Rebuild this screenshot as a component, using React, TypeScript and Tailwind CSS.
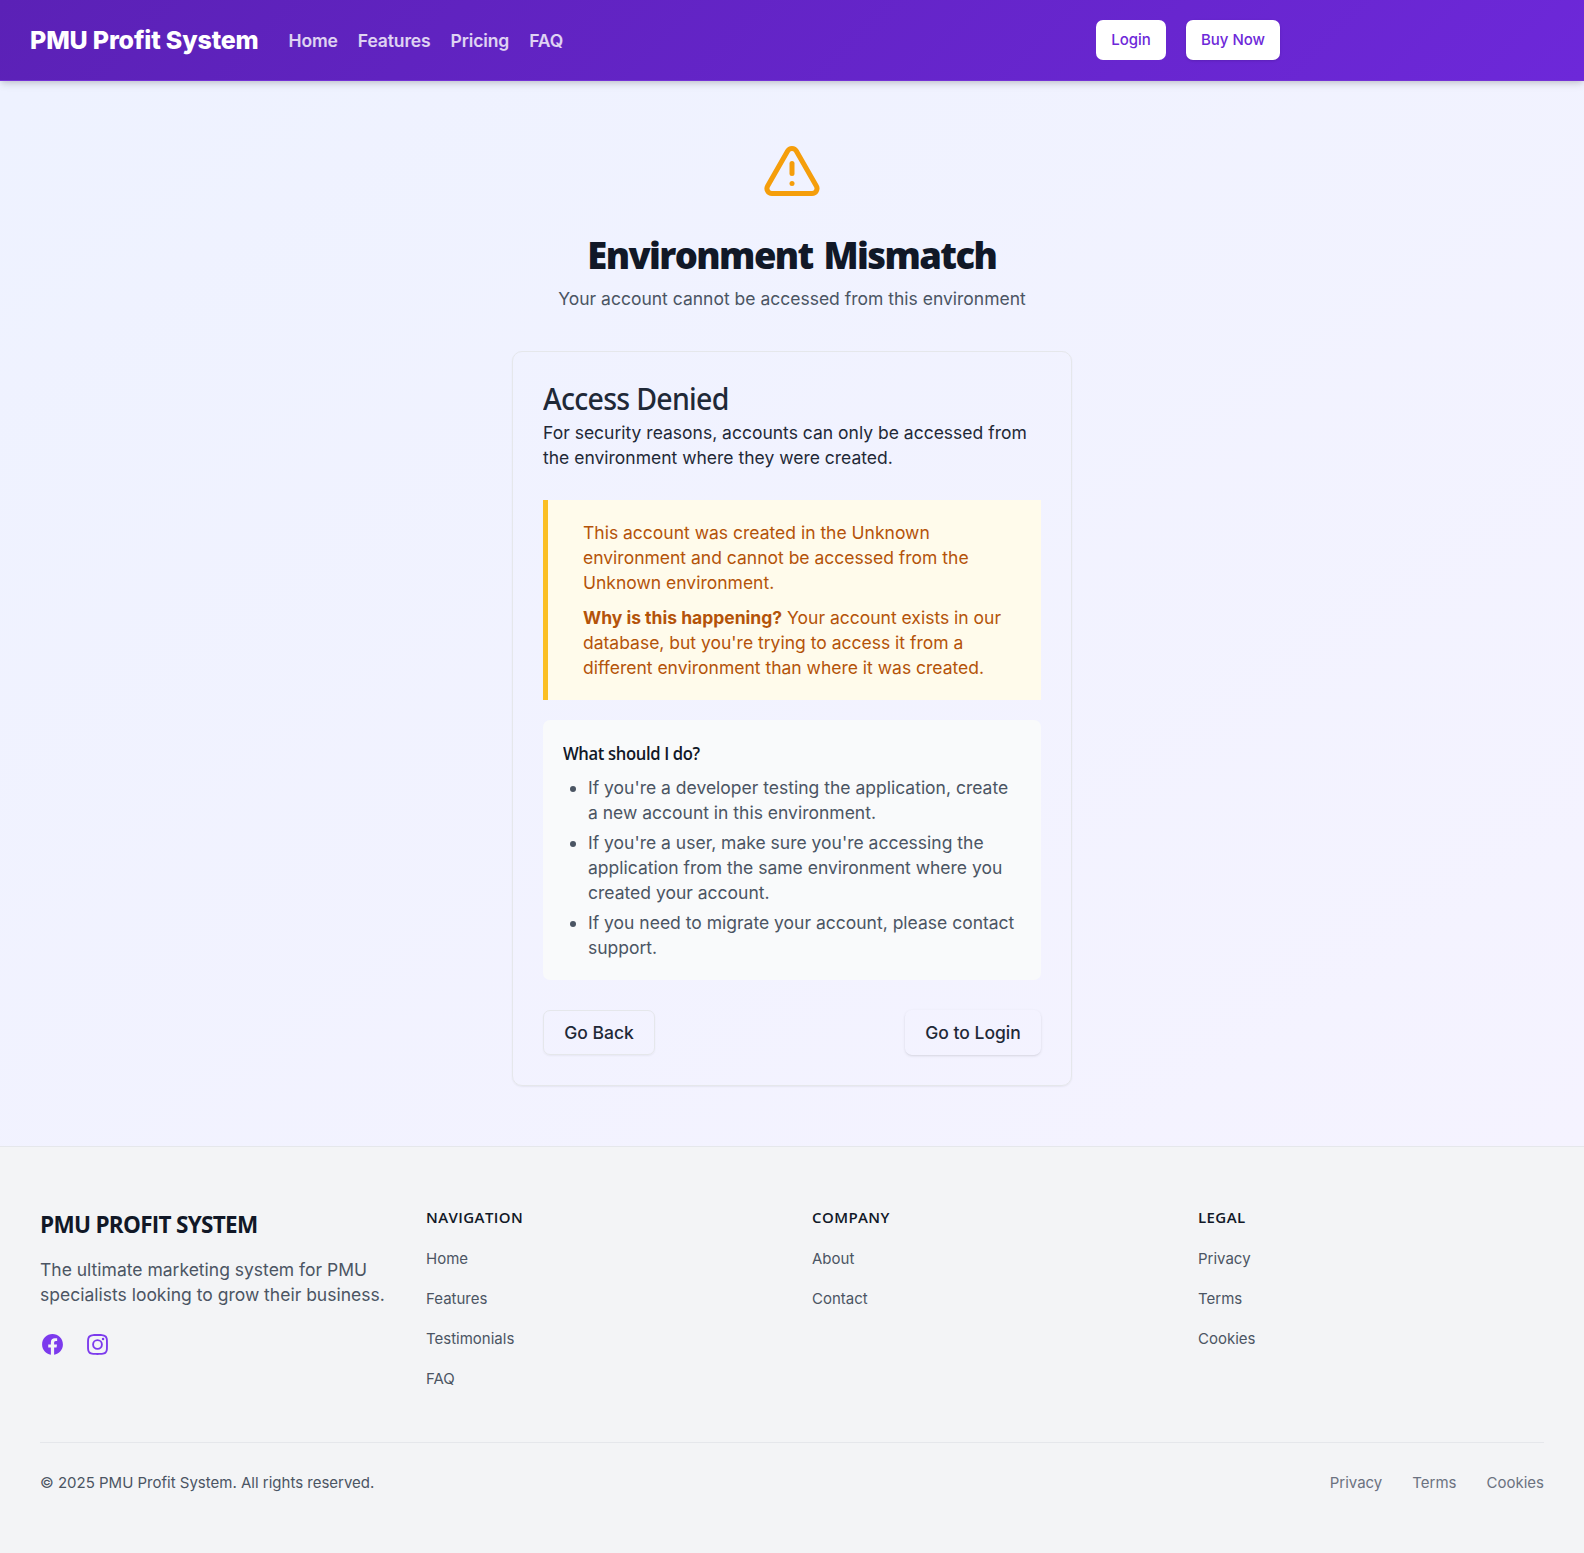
import React from "react";

const columns = [
  { title: "NAVIGATION", links: ["Home", "Features", "Testimonials", "FAQ"] },
  { title: "COMPANY", links: ["About", "Contact"] },
  { title: "LEGAL", links: ["Privacy", "Terms", "Cookies"] },
];

function Header() {
  return (
    <header className="relative h-[81px] border-b border-[#7432d6] bg-[linear-gradient(135deg,#5b21b6,#6d28d9)] shadow-[0_4px_8px_-1px_rgba(0,0,0,0.12),0_2px_5px_-1px_rgba(0,0,0,0.1)]">
      <div className="flex h-20 w-[1280px] items-center pl-[30px]">
        <a className="w-[258.5px] pt-px text-[25px] font-extrabold tracking-[-0.17px] whitespace-nowrap text-white">PMU Profit System</a>
        <nav className="flex gap-5 pt-[3px] text-[17.5px] font-semibold tracking-[-0.12px] text-white/80">
          <a>Home</a>
          <a>Features</a>
          <a>Pricing</a>
          <a>FAQ</a>
        </nav>
        <div className="ml-auto flex gap-5 text-[15px] font-medium text-[#6d28d9]">
          <button className="h-10 w-[70px] rounded-[7px] bg-white">Login</button>
          <button className="h-10 w-[94px] rounded-[7px] bg-white shadow-sm">Buy Now</button>
        </div>
      </div>
    </header>
  );
}

function Footer() {
  return (
    <footer className="h-[407px] border-t border-[#e5e7eb] bg-[#f3f4f6] px-10 pt-[60px] text-[#4b5563]">
      <div className="grid h-[236px] grid-cols-4 gap-10 border-b border-[#e5e7eb]">
        <div>
          <h3 className="font-['Open_Sans',sans-serif] text-[22.5px] leading-[35px] font-bold tracking-[-0.7px] text-[#111827]">PMU PROFIT SYSTEM</h3>
          <p className="mt-[15px] text-[17.5px] leading-[25px] whitespace-nowrap">
            The ultimate marketing system for PMU
            <br />
            specialists looking to grow their business.
          </p>
          <div className="mt-[25px] flex gap-5 text-[#7c3aed]">
            <svg className="size-[25px]" viewBox="0 0 24 24" fill="currentColor">
              <path fillRule="evenodd" d="M22 12c0-5.523-4.477-10-10-10S2 6.477 2 12c0 4.991 3.657 9.128 8.438 9.878v-6.987h-2.54V12h2.54V9.797c0-2.506 1.492-3.89 3.777-3.89 1.094 0 2.238.195 2.238.195v2.46h-1.26c-1.243 0-1.63.771-1.63 1.562V12h2.773l-.443 2.89h-2.33v6.988C18.343 21.128 22 16.991 22 12z" clipRule="evenodd" />
            </svg>
            <svg className="size-[25px]" viewBox="0 0 24 24" fill="currentColor">
              <path fillRule="evenodd" d="M12.315 2c2.43 0 2.784.013 3.808.06 1.064.049 1.791.218 2.427.465a4.902 4.902 0 011.772 1.153 4.902 4.902 0 011.153 1.772c.247.636.416 1.363.465 2.427.048 1.067.06 1.407.06 4.123v.08c0 2.643-.012 2.987-.06 4.043-.049 1.064-.218 1.791-.465 2.427a4.902 4.902 0 01-1.153 1.772 4.902 4.902 0 01-1.772 1.153c-.636.247-1.363.416-2.427.465-1.067.048-1.407.06-4.123.06h-.08c-2.643 0-2.987-.012-4.043-.06-1.064-.049-1.791-.218-2.427-.465a4.902 4.902 0 01-1.772-1.153 4.902 4.902 0 01-1.153-1.772c-.247-.636-.416-1.363-.465-2.427-.047-1.024-.06-1.379-.06-3.808v-.63c0-2.43.013-2.784.06-3.808.049-1.064.218-1.791.465-2.427a4.902 4.902 0 011.153-1.772A4.902 4.902 0 015.45 2.525c.636-.247 1.363-.416 2.427-.465C8.901 2.013 9.256 2 11.685 2h.63zm-.081 1.802h-.468c-2.456 0-2.784.011-3.807.058-.975.045-1.504.207-1.857.344-.467.182-.8.398-1.15.748-.35.35-.566.683-.748 1.15-.137.353-.3.882-.344 1.857-.047 1.023-.058 1.351-.058 3.807v.468c0 2.456.011 2.784.058 3.807.045.975.207 1.504.344 1.857.182.466.399.8.748 1.15.35.35.683.566 1.15.748.353.137.882.3 1.857.344 1.054.048 1.37.058 4.041.058h.08c2.597 0 2.917-.01 3.96-.058.976-.045 1.505-.207 1.858-.344.466-.182.8-.398 1.15-.748.35-.35.566-.683.748-1.15.137-.353.3-.882.344-1.857.048-1.055.058-1.37.058-4.041v-.08c0-2.597-.01-2.917-.058-3.96-.045-.976-.207-1.505-.344-1.858a3.097 3.097 0 00-.748-1.15 3.098 3.098 0 00-1.15-.748c-.353-.137-.882-.3-1.857-.344-1.023-.047-1.351-.058-3.807-.058zM12 6.865a5.135 5.135 0 110 10.27 5.135 5.135 0 010-10.27zm0 1.802a3.333 3.333 0 100 6.666 3.333 3.333 0 000-6.666zm5.338-3.205a1.2 1.2 0 110 2.4 1.2 1.2 0 010-2.4z" clipRule="evenodd" />
            </svg>
          </div>
        </div>
        {columns.map((c) => (
          <div key={c.title}>
            <h4 className="font-['Open_Sans',sans-serif] text-[15px] leading-5 font-semibold tracking-[0.42px] text-[#111827]">{c.title}</h4>
            <ul className="mt-[22px] space-y-5 text-[15px] leading-5">
              {c.links.map((l) => (
                <li key={l}>{l}</li>
              ))}
            </ul>
          </div>
        ))}
      </div>
      <div className="mt-[30px] flex justify-between text-[15px] leading-5">
        <p>© 2025 PMU Profit System. All rights reserved.</p>
        <div className="flex gap-[30px] text-[#6b7280]">
          <a>Privacy</a>
          <a>Terms</a>
          <a>Cookies</a>
        </div>
      </div>
    </footer>
  );
}

export default function App() {
  return (
    <div className="w-full font-[Inter,sans-serif] text-[#1f2937]">
      <Header />
      <main className="flex h-[1065px] flex-col items-center bg-linear-to-br from-[#eef2ff] to-[#f5f3ff] pt-[60px]">
        <svg className="size-[60px] text-[#f59e0b]" viewBox="0 0 24 24" fill="none" stroke="currentColor" strokeWidth="2" strokeLinecap="round" strokeLinejoin="round">
          <path d="m21.73 18-8-14a2 2 0 0 0-3.48 0l-8 14A2 2 0 0 0 4 21h16a2 2 0 0 0 1.73-3" />
          <path d="M12 9v4" />
          <path d="M12 17h.01" />
        </svg>
        <h1 className="mt-[31px] scale-x-97 font-['Open_Sans',sans-serif] text-[37.5px] leading-[45px] font-extrabold tracking-[-1.65px] text-[#111827] [word-spacing:3px]">Environment Mismatch</h1>
        <p className="mt-[9px] text-[17.5px] leading-[25px] text-[#4b5563]">Your account cannot be accessed from this environment</p>
        <section className="mt-10 h-[735px] w-[560px] rounded-[10px] border border-[#e5e7eb] px-[30px] pt-[32px] shadow-[0_1px_2px_rgba(0,0,0,0.06)]">
          <h2 className="origin-left scale-x-95 font-['Noto_Sans',sans-serif] text-[30px] leading-[30px] font-medium tracking-[-0.75px]">Access Denied</h2>
          <p className="mt-[6px] text-[17.5px] leading-[25px]">For security reasons, accounts can only be accessed from the environment where they were created.</p>
          <div className="mt-[30px] border-l-5 border-[#fbbf24] bg-[#fffbeb] py-5 pr-5 pl-[35px] text-[17.5px] leading-[25px] text-[#b45309]">
            <p>This account was created in the Unknown environment and cannot be accessed from the Unknown environment.</p>
            <p className="mt-[10px]">
              <strong className="font-bold">Why is this happening?</strong> Your account exists in our database, but you're trying to access it from a different environment than where it was created.
            </p>
          </div>
          <div className="mt-5 rounded-[7px] bg-[#f9fafb] p-5 text-[17.5px] leading-[25px] text-[#4b5563]">
            <h3 className="origin-left scale-x-95 pt-px font-['Open_Sans',sans-serif] font-semibold tracking-[-0.38px] text-[#111827]">What should I do?</h3>
            <ul className="mt-[9px] list-disc space-y-[5px] pl-[25px]">
              <li>If you're a developer testing the application, create a new account in this environment.</li>
              <li>If you're a user, make sure you're accessing the application from the same environment where you created your account.</li>
              <li>If you need to migrate your account, please contact support.</li>
            </ul>
          </div>
          <div className="mt-[30px] flex justify-between text-[17.5px] font-medium">
            <button className="h-[45px] w-[112px] rounded-[7px] border border-[#e5e7eb] pt-px shadow-xs">Go Back</button>
            <button className="h-[45px] w-[136px] rounded-[7px] pt-px shadow-sm">Go to Login</button>
          </div>
        </section>
      </main>
      <Footer />
    </div>
  );
}
